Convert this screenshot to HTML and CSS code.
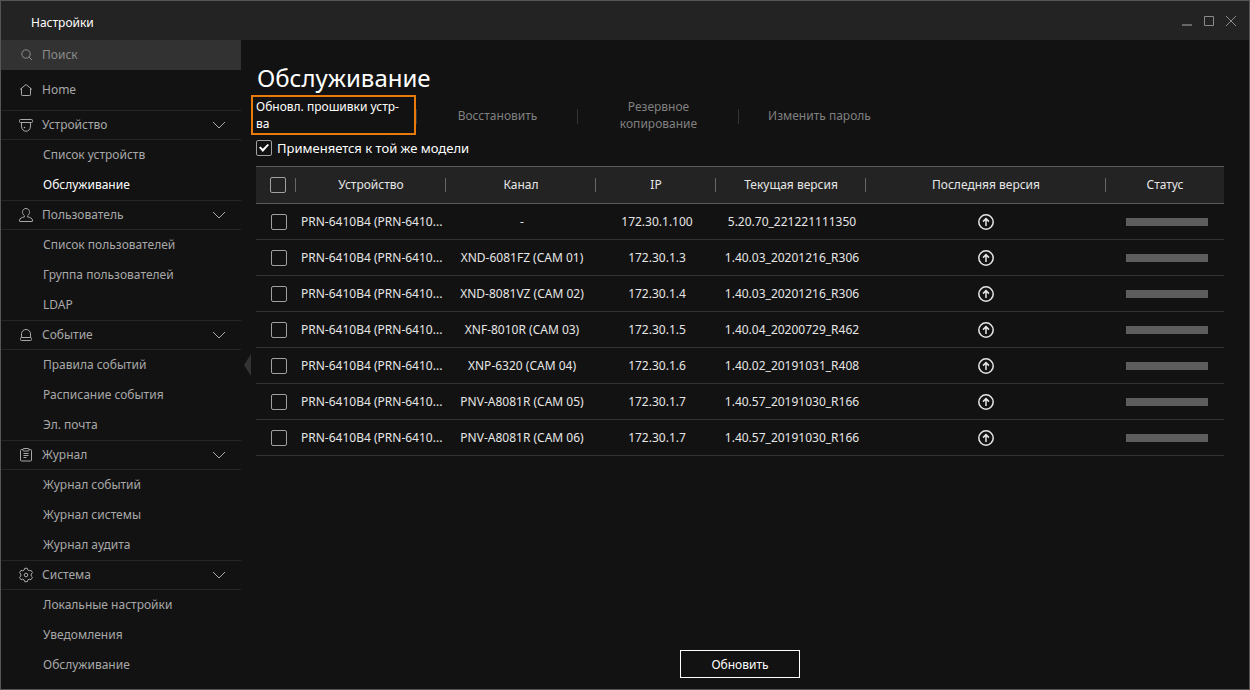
FILE: index.html
```html
<!DOCTYPE html>
<html lang="ru">
<head>
<meta charset="utf-8">
<title>Настройки</title>
<link rel="stylesheet" href="styles.css">
</head>
<body>
<svg class="sprite" aria-hidden="true">
  <symbol id="chevron" viewBox="0 0 14 8"><path d="M1 1l6 6 6-6"/></symbol>
  <symbol id="upload" viewBox="0 0 16 16"><circle cx="8" cy="8" r="7.2"/><path d="M8 12V5M5 7.6l3-3 3 3"/></symbol>
</svg>
<div class="window">
  <header class="titlebar">
    <span class="titlebar-text">Настройки</span>
    <div class="window-controls">
      <button type="button" aria-label="Свернуть"><svg viewBox="0 0 12 12"><path class="thick" d="M1 10h10"/></svg></button>
      <button type="button" aria-label="Развернуть"><svg viewBox="0 0 12 12"><path d="M1.500 1.500h9v9h-9z"/></svg></button>
      <button type="button" aria-label="Закрыть"><svg viewBox="0 0 12 12"><path d="M1 1l10 10M11 1L1 11"/></svg></button>
    </div>
  </header>
  <div class="body">
    <nav class="sidebar">
      <label class="search">
        <svg class="search-icon" viewBox="0 0 12 12"><circle cx="5" cy="5" r="4.200"/><path d="M8 8l3 3"/></svg>
        <input type="search" placeholder="Поиск" aria-label="Поиск">
      </label>
      <a class="home" href="#home">
        <svg class="nav-icon" viewBox="0 0 16 16"><path d="M2 7.500L8 2.500l6 5M3.500 6.500v6.200q0 .8.800.8h7.400q.8 0 .8-.8V6.500"/></svg>
        Home
      </a>
      <section>
        <button class="group" type="button"><svg class="nav-icon" viewBox="0 0 16 16"><rect x="1.500" y="2.500" width="13" height="3" rx="1"/><path d="M3.500 5.500v3.500c0 7 9 7 9 0V5.500"/><circle class="dot" cx="6.500" cy="10.500" r=".8"/></svg>Устройство<svg class="chevron"><use href="#chevron"/></svg></button>
        <a class="item" href="#devices">Список устройств</a>
        <a class="item current" href="#maintenance" aria-current="page">Обслуживание</a>
      </section>
      <section>
        <button class="group" type="button"><svg class="nav-icon" viewBox="0 0 16 16"><path d="M6.500 8.800C3.200 6.500 4.200 1.500 8 1.500s4.800 5 1.500 7.300v1c2.500.5 5 1.700 5 3.300v.9q0 .5-.5.5H2q-.5 0-.5-.5v-.9c0-1.600 2.500-2.800 5-3.300z"/></svg>Пользователь<svg class="chevron"><use href="#chevron"/></svg></button>
        <a class="item" href="#users">Список пользователей</a>
        <a class="item" href="#groups">Группа пользователей</a>
        <a class="item" href="#ldap">LDAP</a>
      </section>
      <section>
        <button class="group" type="button"><svg class="nav-icon" viewBox="0 0 16 16"><path d="M3.500 10.500V6.800a4.500 4.300 0 0 1 9 0v3.700"/><rect x="2.500" y="10.500" width="11" height="3" rx="1"/></svg>Событие<svg class="chevron"><use href="#chevron"/></svg></button>
        <a class="item" href="#rules">Правила событий</a>
        <a class="item" href="#schedule">Расписание события</a>
        <a class="item" href="#mail">Эл. почта</a>
      </section>
      <section>
        <button class="group" type="button"><svg class="nav-icon" viewBox="0 0 16 16"><path d="M5 2.500H3.500q-1 0-1 1v9.500q0 1 1 1h9q1 0 1-1V3.500q0-1-1-1H11"/><rect x="5" y="1.500" width="6" height="2.500" rx=".8"/><path d="M5.500 6.500h5M5.500 8.500h5M5.500 10.500h3"/></svg>Журнал<svg class="chevron"><use href="#chevron"/></svg></button>
        <a class="item" href="#event-log">Журнал событий</a>
        <a class="item" href="#system-log">Журнал системы</a>
        <a class="item" href="#audit-log">Журнал аудита</a>
      </section>
      <section>
        <button class="group" type="button"><svg class="nav-icon" viewBox="0 0 16 16"><path d="M6.200 3l.5-1.700h2.600l.5 1.700 1.400.8 1.800-.5 1.500 2.400L13.200 7v2l1.300 1.300-1.500 2.400-1.800-.5-1.400.8-.5 1.700H6.700L6.200 13l-1.400-.8-1.800.5-1.500-2.400L2.800 9V7L1.500 5.700 3 3.300l1.800.5z"/><circle cx="8" cy="8" r="1.800"/></svg>Система<svg class="chevron"><use href="#chevron"/></svg></button>
        <a class="item" href="#local">Локальные настройки</a>
        <a class="item" href="#notifications">Уведомления</a>
        <a class="item" href="#system-maintenance">Обслуживание</a>
      </section>
      <button class="collapse" type="button" aria-label="Скрыть меню"></button>
    </nav>
    <main class="content">
      <h1>Обслуживание</h1>
      <div class="tabs" role="tablist">
        <button class="tab active" type="button" role="tab" aria-selected="true">Обновл. прошивки устр-ва</button>
        <button class="tab" type="button" role="tab">Восстановить</button>
        <button class="tab" type="button" role="tab">Резервное копирование</button>
        <button class="tab" type="button" role="tab">Изменить пароль</button>
      </div>
      <label class="same-model"><input type="checkbox" checked>Применяется к той же модели</label>
      <table>
        <colgroup><col class="c-check"><col class="c-device"><col class="c-channel"><col class="c-ip"><col class="c-version"><col><col class="c-status"></colgroup>
        <thead>
          <tr><th><input type="checkbox" aria-label="Выбрать все"></th><th>Устройство</th><th>Канал</th><th>IP</th><th>Текущая версия</th><th>Последняя версия</th><th>Статус</th></tr>
        </thead>
        <tbody>
          <tr><td><input type="checkbox" aria-label="Выбрать"></td><td>PRN-6410B4 (PRN-6410...</td><td>-</td><td>172.30.1.100</td><td>5.20.70_221221111350</td><td><button class="upload" type="button" aria-label="Загрузить"><svg><use href="#upload"/></svg></button></td><td><div class="bar"></div></td></tr>
          <tr><td><input type="checkbox" aria-label="Выбрать"></td><td>PRN-6410B4 (PRN-6410...</td><td>XND-6081FZ (CAM 01)</td><td>172.30.1.3</td><td>1.40.03_20201216_R306</td><td><button class="upload" type="button" aria-label="Загрузить"><svg><use href="#upload"/></svg></button></td><td><div class="bar"></div></td></tr>
          <tr><td><input type="checkbox" aria-label="Выбрать"></td><td>PRN-6410B4 (PRN-6410...</td><td>XND-8081VZ (CAM 02)</td><td>172.30.1.4</td><td>1.40.03_20201216_R306</td><td><button class="upload" type="button" aria-label="Загрузить"><svg><use href="#upload"/></svg></button></td><td><div class="bar"></div></td></tr>
          <tr><td><input type="checkbox" aria-label="Выбрать"></td><td>PRN-6410B4 (PRN-6410...</td><td>XNF-8010R (CAM 03)</td><td>172.30.1.5</td><td>1.40.04_20200729_R462</td><td><button class="upload" type="button" aria-label="Загрузить"><svg><use href="#upload"/></svg></button></td><td><div class="bar"></div></td></tr>
          <tr><td><input type="checkbox" aria-label="Выбрать"></td><td>PRN-6410B4 (PRN-6410...</td><td>XNP-6320 (CAM 04)</td><td>172.30.1.6</td><td>1.40.02_20191031_R408</td><td><button class="upload" type="button" aria-label="Загрузить"><svg><use href="#upload"/></svg></button></td><td><div class="bar"></div></td></tr>
          <tr><td><input type="checkbox" aria-label="Выбрать"></td><td>PRN-6410B4 (PRN-6410...</td><td>PNV-A8081R (CAM 05)</td><td>172.30.1.7</td><td>1.40.57_20191030_R166</td><td><button class="upload" type="button" aria-label="Загрузить"><svg><use href="#upload"/></svg></button></td><td><div class="bar"></div></td></tr>
          <tr><td><input type="checkbox" aria-label="Выбрать"></td><td>PRN-6410B4 (PRN-6410...</td><td>PNV-A8081R (CAM 06)</td><td>172.30.1.7</td><td>1.40.57_20191030_R166</td><td><button class="upload" type="button" aria-label="Загрузить"><svg><use href="#upload"/></svg></button></td><td><div class="bar"></div></td></tr>
        </tbody>
      </table>
      <button class="update" type="button">Обновить</button>
    </main>
  </div>
</div>
</body>
</html>
```
FILE: styles.css
```css
* { box-sizing: border-box; }
body {
  margin: 0;
  background: #121212;
  color: #e6e6e6;
  font: 12px/17px "Noto Sans", sans-serif;
}
button, input { font: inherit; color: inherit; }
button { border: 0; padding: 0; background: none; cursor: pointer; }
a { color: inherit; text-decoration: none; }
svg { fill: none; stroke: currentColor; flex: none; }
.sprite { display: none; }
.window {
  display: flex;
  flex-direction: column;
  min-height: 100vh;
  border: 1px solid #555;
}
.titlebar {
  display: flex;
  align-items: center;
  justify-content: space-between;
  height: 39px;
  padding: 4px 12px 0 30px;
  background: #232323;
  color: #fff;
}
.window-controls { display: flex; gap: 10px; padding-bottom: 3px; color: #8a8a8a; }
.window-controls svg { display: block; width: 12px; height: 12px; }
.thick { stroke: #666; stroke-width: 2; }
.body { display: flex; flex: 1; }

.sidebar { position: relative; width: 240px; flex: none; color: #a8a8a8; line-height: 16px; }
.search {
  display: flex;
  align-items: center;
  gap: 9px;
  height: 30px;
  padding-left: 20px;
  background: #323232;
  color: #8c8c8c;
}
.search-icon { width: 12px; height: 12px; }
.search input {
  flex: 1;
  min-width: 0;
  padding: 0;
  border: 0;
  outline: 0;
  background: none;
}
.search input::placeholder { color: #8c8c8c; }
.home, .group {
  display: flex;
  align-items: center;
  gap: 8px;
  width: 100%;
  padding: 0 15px 0 17px;
}
.home { height: 40px; }
.group { height: 30px; border: solid #262626; border-width: 1px 0; }
.nav-icon { width: 16px; height: 16px; }
.dot { fill: currentColor; stroke: none; }
.chevron { width: 14px; height: 8px; margin-left: auto; }
.item { display: flex; align-items: center; height: 30px; padding-left: 42px; }
.current { color: #fff; }
.collapse {
  position: absolute;
  left: 243px;
  top: 314px;
  width: 7px;
  height: 22px;
  background: #333;
  clip-path: polygon(0 50%, 100% 0, 100% 100%);
}

.content {
  display: flex;
  flex-direction: column;
  flex: 1;
  min-width: 0;
  padding: 21px 25px 11px 15px;
}
h1 { margin: 0; padding-left: 1px; color: #fff; font-size: 24px; font-weight: 400; line-height: 34px; }
.tabs { display: flex; height: 40px; }
.tab {
  position: relative;
  width: 161px;
  padding: 0 24px;
  color: #808080;
}
.tab:not(:last-child)::before {
  content: "";
  position: absolute;
  right: 0;
  top: 14px;
  width: 1px;
  height: 15px;
  background: #333;
}
.tab.active { padding: 0 10px 0 0; color: #fff; text-align: left; }
.tab.active::after {
  content: "";
  position: absolute;
  inset: 0 1px 0 -5px;
  border: 2px solid #e87a0c;
}
.same-model {
  display: flex;
  align-items: center;
  gap: 5px;
  height: 26px;
  margin-bottom: 5px;
  color: #fff;
  font-size: 13px;
}
input[type="checkbox"] {
  appearance: none;
  display: block;
  width: 16px;
  height: 16px;
  margin: 0;
  border: 1px solid #a0a0a0;
  border-radius: 2px;
}
input[type="checkbox"]:checked {
  display: grid;
  place-items: center;
}
input[type="checkbox"]:checked::after {
  content: "";
  width: 10px;
  height: 8px;
  background: #fff;
  clip-path: polygon(0 45%, 15% 30%, 38% 60%, 86% 0, 100% 14%, 38% 100%);
}
table { width: 100%; border-collapse: separate; border-spacing: 0; table-layout: fixed; }
.c-check { width: 40px; }
.c-device, .c-channel, .c-version { width: 150px; }
.c-ip { width: 120px; }
.c-status { width: 118px; }
th, td { padding: 0; text-align: center; font-weight: 400; white-space: nowrap; }
th {
  height: 38px;
  border: solid #5a5a5a;
  border-width: 1px 0;
  background: #232323 linear-gradient(#666, #666) right center / 1px 14px no-repeat;
  line-height: 16px;
}
th:last-child { background: #232323; }
td { height: 36px; padding: 1px 0 0 2px; border-bottom: 1px solid #333; line-height: 18px; }
th:first-child { padding-left: 14px; }
td:first-child { padding-left: 15px; }
td:nth-child(2) { padding-left: 5px; text-align: left; }
td:nth-child(6) { padding-left: 0; }
td:last-child { padding-left: 4px; }
.upload { display: block; margin: 0 auto; }
.upload svg { display: block; width: 16px; height: 16px; stroke-width: 1.5; }
.bar { width: 82px; height: 8px; margin: 0 auto; background: #5e5e5e; }
.update {
  align-self: center;
  width: 120px;
  height: 28px;
  margin-top: auto;
  border: 1px solid #fff;
  color: #fff;
}
```
